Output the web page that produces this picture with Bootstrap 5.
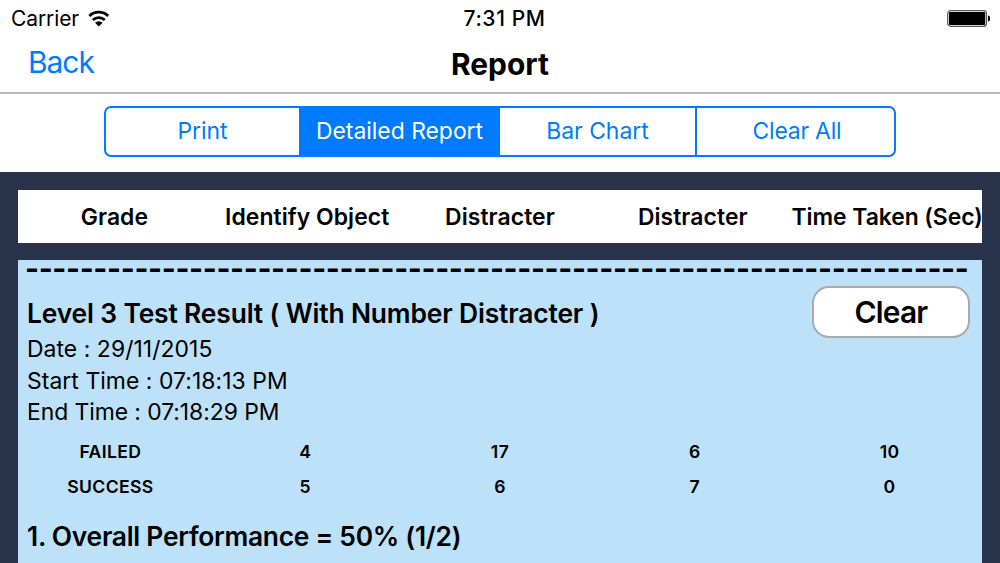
<!DOCTYPE html>
<html lang="en">
<head>
    <meta charset="UTF-8">
    <meta name="viewport" content="width=device-width, initial-scale=1.0">
    <title>Report</title>
    <link href="https://cdn.jsdelivr.net/npm/bootstrap@5.3.0/dist/css/bootstrap.min.css" rel="stylesheet">
    <style>
        body {
            font-family: Inter, "Liberation Sans", sans-serif;
            color: #000;
            height: 563px;
            overflow: hidden;
            background: #29334b;
            white-space: nowrap;
        }
        .status-bar { height: 35px; font-size: 21px; line-height: 37px; padding: 0 10px 0 11px; }
        .status-bar .carrier { letter-spacing: -.1px; }
        .status-bar .clock { font-weight: 500; padding-left: 8px; letter-spacing: .6px; }
        .title-bar { height: 59px; border-bottom: 2px solid #b9b9bb; padding: 0 28px; }
        .back-link { color: #007aff; font-size: 29.9px; line-height: 55px; letter-spacing: -1px; }
        .page-title { font-size: 29.9px; font-weight: 700; line-height: 59px; letter-spacing: 0; margin: 0; }
        .tool-bar { height: 78px; padding-top: 12px; }
        .segments { width: 792px; height: 51px; margin: 0 auto; }
        .segments .btn {
            --bs-btn-color: #007aff;
            --bs-btn-border-color: #007aff;
            --bs-btn-border-width: 2px;
            --bs-btn-border-radius: 7px;
            --bs-btn-active-bg: #007aff;
            --bs-btn-active-border-color: #007aff;
            --bs-btn-active-color: #fff;
            flex: 0 0 auto;
            padding: 0;
            font-size: 22.9px;
            line-height: 47px;
        }
        .segments.btn-group > .btn + .btn:not(:first-child) { margin-left: -2px; }
        .segments .btn:last-child { letter-spacing: -.2px; padding-left: 3px; }
        .columns-head { height: 53px; margin: 18px 18px 0 18px; font-size: 22.9px; font-weight: 600; line-height: 54px; }
        .columns-head .cell { letter-spacing: .08px; }
        .columns-head .cell:last-child { letter-spacing: -.05px; padding-left: 3px; }
        .result-panel { height: 303px; margin: 17px 18px 0; background: #bde1f9; padding: 0 9px; }
        .cell { flex: 0 0 20%; width: 20%; display: flex; justify-content: center; }
        .divider { font-size: 30px; font-weight: 700; line-height: 16px; height: 26px; letter-spacing: -.36px; margin-left: -2px; }
        .result-title { font-size: 26.4px; font-weight: 600; line-height: 54px; height: 48px; letter-spacing: -.15px; margin: 0; }
        .clear-btn {
            width: 158px;
            height: 52px;
            margin: 0 3px -4px 0;
            padding: 0;
            border: 2px solid #aaa;
            border-radius: 17px;
            background: #fff;
            color: #000;
            font-size: 29.9px;
            font-weight: 600;
            line-height: 48px;
            letter-spacing: -.8px;
        }
        .meta-line { font-size: 22.9px; line-height: 31.6px; letter-spacing: .06px; }
        .meta-line.end { letter-spacing: -.06px; }
        .score-row { height: 35px; margin: 0 -14px; font-size: 17.6px; font-weight: 600; line-height: 36px; letter-spacing: .35px; }
        .score-row.first { margin-top: 5px; }
        .summary { font-size: 26.4px; font-weight: 600; line-height: 64px; letter-spacing: -.28px; }
    </style>
</head>
<body>
    <header class="bg-white">
        <div class="status-bar row g-0">
            <div class="col d-flex align-items-center">
                <span class="carrier">Carrier</span>
                <svg class="ms-2" width="24" height="18" viewBox="0 0 24 18" fill="none" stroke="#000" stroke-width="2.7">
                    <path d="M2.4 5.9a13.8 13.8 0 0 1 18.8 0"/>
                    <path d="M5.8 10.1a8.7 8.7 0 0 1 12 0"/>
                    <path d="M11.8 16.6 8 12.8a5.4 5.4 0 0 1 7.6 0Z" fill="#000" stroke="none"/>
                </svg>
            </div>
            <div class="col-auto clock">7:31 PM</div>
            <div class="col d-flex align-items-center justify-content-end">
                <svg width="43" height="18" viewBox="0 0 43 18">
                    <rect x=".7" y=".7" width="38.8" height="15.6" rx="3" fill="#fff" stroke="#555" stroke-width="1.2"/>
                    <rect x="2" y="2" width="36.2" height="13" rx="1" fill="#000"/>
                    <path d="M41 5.5q2.4.6 2.4 3T41 11.5Z" fill="#000"/>
                </svg>
            </div>
        </div>
        <nav class="title-bar row g-0">
            <div class="col"><a class="back-link text-decoration-none" href="#">Back</a></div>
            <h1 class="page-title col-auto">Report</h1>
            <div class="col"></div>
        </nav>
        <div class="tool-bar">
            <div class="segments btn-group d-flex">
                <button type="button" class="btn" style="width: 197px">Print</button>
                <button type="button" class="btn active" style="width: 201px">Detailed Report</button>
                <button type="button" class="btn" style="width: 199px">Bar Chart</button>
                <button type="button" class="btn" style="width: 201px">Clear All</button>
            </div>
        </div>
    </header>

    <main>
        <div class="columns-head d-flex bg-white">
            <div class="cell">Grade</div>
            <div class="cell">Identify Object</div>
            <div class="cell">Distracter</div>
            <div class="cell">Distracter</div>
            <div class="cell">Time Taken (Sec)</div>
        </div>

        <section class="result-panel">
            <div class="divider">---------------------------------------------------------------------</div>
            <div class="d-flex justify-content-between align-items-start">
                <h2 class="result-title">Level 3 Test Result ( With Number Distracter )</h2>
                <button type="button" class="btn clear-btn">Clear</button>
            </div>
            <div class="meta-line">Date : 29/11/2015</div>
            <div class="meta-line">Start Time : 07:18:13 PM</div>
            <div class="meta-line end">End Time : 07:18:29 PM</div>
            <div class="score-row first d-flex">
                <div class="cell">FAILED</div>
                <div class="cell">4</div>
                <div class="cell">17</div>
                <div class="cell">6</div>
                <div class="cell">10</div>
            </div>
            <div class="score-row d-flex">
                <div class="cell">SUCCESS</div>
                <div class="cell">5</div>
                <div class="cell">6</div>
                <div class="cell">7</div>
                <div class="cell">0</div>
            </div>
            <div class="summary">1. Overall Performance = 50% (1/2)</div>
        </section>
    </main>

    <script src="https://cdn.jsdelivr.net/npm/bootstrap@5.3.0/dist/js/bootstrap.bundle.min.js"></script>
</body>
</html>
